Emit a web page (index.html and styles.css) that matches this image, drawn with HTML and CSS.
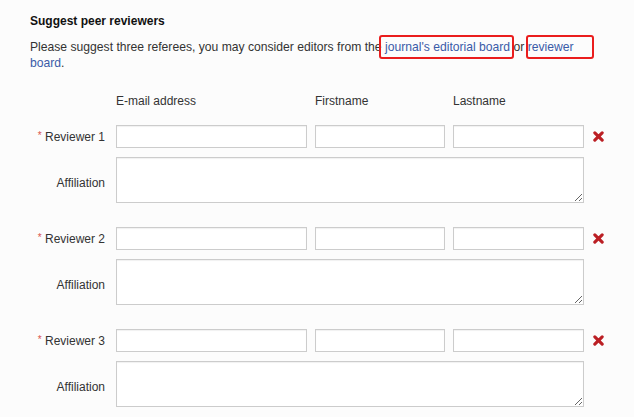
FILE: index.html
```html
<!DOCTYPE html>
<html>

<head>
    <title>Suggest peer reviewers</title>
    <link rel="stylesheet" href="styles.css">
</head>

<body>
    <div class="container">
        <h3>Suggest peer reviewers</h3>
        <p class="intro">Please suggest three referees, you may consider editors from the <a href="#">journal's editorial board</a> or <a href="#">reviewer board</a>.</p>
        <span class="mark mark-board"></span>
        <span class="mark mark-reviewer"></span>

        <div class="grid head">
            <span></span>
            <span>E-mail address</span>
            <span>Firstname</span>
            <span>Lastname</span>
        </div>

        <div class="grid reviewer">
            <label class="req"><i>*</i> Reviewer 1</label>
            <input type="text">
            <input type="text">
            <input type="text">
            <a class="remove" href="#"><svg width="12" height="11" viewBox="0 0 12 11"><path d="M2 1.5 L10 9.5 M10 1.5 L2 9.5" /></svg></a>
            <label class="aff">Affiliation</label>
            <textarea></textarea>
        </div>

        <div class="grid reviewer">
            <label class="req"><i>*</i> Reviewer 2</label>
            <input type="text">
            <input type="text">
            <input type="text">
            <a class="remove" href="#"><svg width="12" height="11" viewBox="0 0 12 11"><path d="M2 1.5 L10 9.5 M10 1.5 L2 9.5" /></svg></a>
            <label class="aff">Affiliation</label>
            <textarea></textarea>
        </div>

        <div class="grid reviewer">
            <label class="req"><i>*</i> Reviewer 3</label>
            <input type="text">
            <input type="text">
            <input type="text">
            <a class="remove" href="#"><svg width="12" height="11" viewBox="0 0 12 11"><path d="M2 1.5 L10 9.5 M10 1.5 L2 9.5" /></svg></a>
            <label class="aff">Affiliation</label>
            <textarea></textarea>
        </div>
    </div>
</body>

</html>
```

FILE: styles.css
```css
body {
    font-family: "Liberation Sans", Arial, sans-serif;
    font-size: 12px;
    color: #333;
    background-color: #fcfcfc;
    margin: 0;
    padding: 0;
}

.container {
    position: relative;
    width: 566px;
    padding: 13px 0 0 30px;
}

h3 {
    font-size: 12px;
    line-height: 16px;
    color: #111;
    margin: 0 0 10px;
}

.intro {
    font-size: 12.15px;
    line-height: 16px;
    margin: 0 0 22px;
}

.intro a {
    color: #3a5ba8;
    text-decoration: none;
}

.mark {
    position: absolute;
    top: 35px;
    height: 20px;
    border: 2px solid #ea1d1d;
    border-radius: 3px;
}

.mark-board {
    left: 379px;
    width: 131px;
}

.mark-reviewer {
    left: 526px;
    width: 64px;
}

.grid {
    display: grid;
    grid-template-columns: 78px 191px 130px 131px 12px;
    column-gap: 8px;
    align-items: center;
}

.head {
    line-height: 16px;
    margin-top: 1px;
    margin-bottom: 16px;
}

.reviewer {
    row-gap: 9px;
    margin-bottom: 24px;
}

.reviewer label {
    text-align: right;
    padding-right: 3px;
}

.reviewer .aff {
    padding-top: 6px;
}

.req i {
    font-style: normal;
    color: #d9534f;
    font-size: 10px;
    vertical-align: 2px;
}

input[type="text"],
textarea {
    box-sizing: border-box;
    margin: 0;
    border: 1px solid #ccc;
    background-color: #fff;
    box-shadow: inset 0 1px 1px rgba(0, 0, 0, 0.06);
    font-family: inherit;
}

input[type="text"] {
    height: 23px;
}

textarea {
    grid-column: 2 / 5;
    height: 46px;
    resize: vertical;
}

.remove {
    display: flex;
    margin-left: 1px;
}

.remove path {
    stroke: #bb1f24;
    stroke-width: 3.4;
    stroke-linecap: round;
    fill: none;
}
```
